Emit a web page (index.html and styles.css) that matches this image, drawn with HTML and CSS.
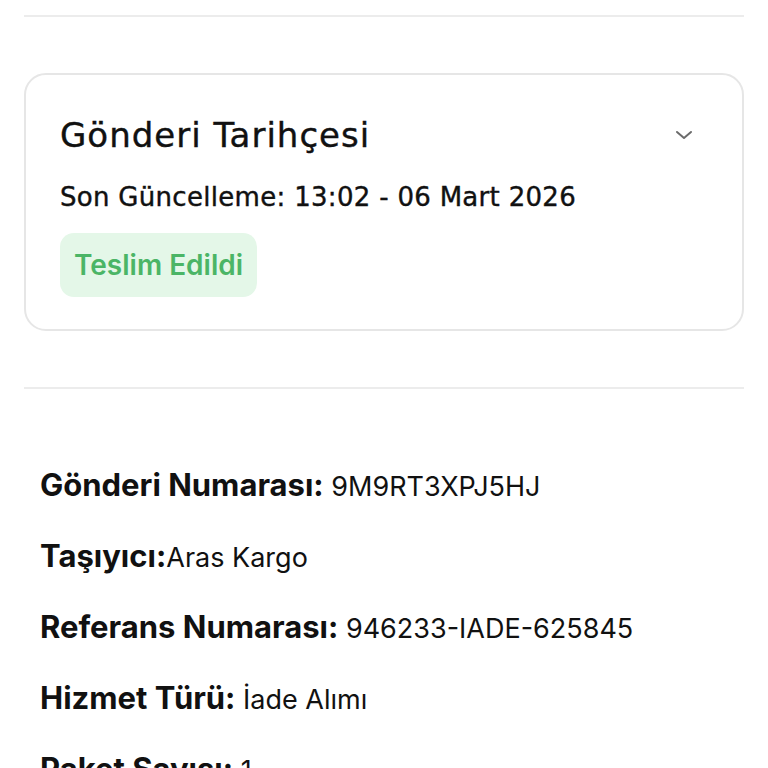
FILE: index.html
```html
<!DOCTYPE html>
<html lang="tr">
<head>
    <meta charset="UTF-8">
    <meta name="viewport" content="width=device-width, initial-scale=1.0">
    <title>Gönderi Detayı</title>
    <link rel="stylesheet" href="styles.css">
</head>
<body>
    <hr class="divider top">

    <div class="history-card">
        <div class="history-head">
            <h2>Gönderi Tarihçesi</h2>
            <svg class="chevron" width="24" height="24" viewBox="0 0 24 24" fill="none" stroke="#6b6b6b" stroke-width="2" stroke-linecap="round" stroke-linejoin="round">
                <path d="M5 9l7 6 7-6"/>
            </svg>
        </div>
        <p class="updated">Son Güncelleme: 13:02 - 06 Mart 2026</p>
        <span class="badge">Teslim Edildi</span>
    </div>

    <hr class="divider">

    <div class="details">
        <p><strong>Gönderi Numarası:</strong> 9M9RT3XPJ5HJ</p>
        <p><strong>Taşıyıcı:</strong>Aras Kargo</p>
        <p><strong>Referans Numarası:</strong> 946233-IADE-625845</p>
        <p><strong>Hizmet Türü:</strong> İade Alımı</p>
        <p><strong>Paket Sayısı:</strong> 1</p>
    </div>
</body>
</html>
```

FILE: styles.css
```css
body {
    margin: 0;
    padding: 0 24px;
    background: #fff;
    color: #111;
    font-family: "DejaVu Sans", sans-serif;
}
.divider {
    border: none;
    border-top: 2px solid #ececec;
    margin: 0;
}
.divider.top {
    margin-top: 15px;
}
.history-card {
    margin-top: 56px;
    border: 2px solid #e6e6e6;
    border-radius: 22px;
    padding: 38px 34px 32px;
}
.history-head {
    display: flex;
    justify-content: space-between;
    align-items: center;
}
.history-head h2 {
    margin: 0;
    font-size: 34px;
    font-weight: normal;
    letter-spacing: 1px;
    line-height: 44px;
    -webkit-text-stroke: 0.4px #111;
}
.chevron {
    margin-right: 12px;
}
.updated {
    margin: 25px 0 21px;
    font-size: 26px;
    letter-spacing: 0.3px;
    line-height: 30px;
    -webkit-text-stroke: 0.4px #111;
}
.badge {
    display: inline-block;
    background: #e4f7e8;
    color: #4bb566;
    font-family: Inter, sans-serif;
    font-weight: 600;
    font-size: 28px;
    line-height: 64px;
    padding: 0 14px;
    border-radius: 14px;
}
.history-card + .divider {
    margin-top: 56px;
}
.details {
    padding: 80px 16px 0;
    font-family: Inter, sans-serif;
}
.details p {
    margin: 0 0 35px;
    font-size: 27px;
    line-height: 36px;
}
.details strong {
    font-size: 31px;
    font-weight: 700;
    line-height: 1;
}
```
